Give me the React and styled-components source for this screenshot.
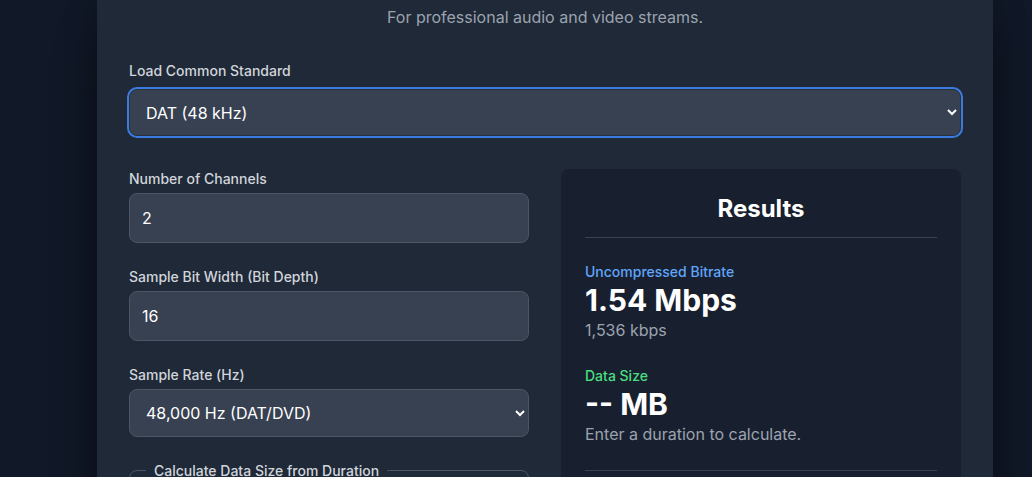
import React, { useState } from "react";
import styled, { createGlobalStyle } from "styled-components";

const Global = createGlobalStyle`
  html, body {
    margin: 0;
    padding: 0;
    background: #111827;
    font-family: Inter, "Noto Sans", sans-serif;
    color: #f9fafb;
    overflow: hidden;
  }
  * { box-sizing: border-box; }
`;

const Page = styled.div`
  display: flex;
  justify-content: center;
  padding-left: 58px;
  min-height: 477px;
`;

const Card = styled.main`
  width: 896px;
  background: #1f2937;
  padding: 5px 32px 40px;
  box-shadow: 0 25px 50px -12px rgba(0, 0, 0, 0.45), 0 0 30px rgba(0, 0, 0, 0.25);
`;

const Subtitle = styled.p`
  margin: 0 0 32px;
  text-align: center;
  font-size: 16px;
  line-height: 24px;
  color: #9ca3af;
`;

const Label = styled.label`
  display: block;
  font-size: 14px;
  line-height: 20px;
  font-weight: 500;
  color: #d1d5db;
  margin-bottom: ${(p) => p.$gap || 4}px;
`;

const Field = styled.div`
  margin-bottom: ${(p) => p.$mb || 0}px;
`;

const fieldBase = `
  width: 100%;
  background: #374151;
  border: 1px solid #4b5563;
  border-radius: 8px;
  color: #ffffff;
  font-family: Inter, "Noto Sans", sans-serif;
  font-size: 16px;
  outline: none;
`;

const Select = styled.select`
  ${fieldBase}
  height: ${(p) => (p.$focused ? 47 : 48)}px;
  padding: 0 12px;
  color-scheme: dark;
  ${(p) =>
    p.$focused &&
    `
    border-color: #27303d;
    box-shadow: 0 0 0 2px #3b7be0;
  `}
`;

const Input = styled.input`
  ${fieldBase}
  height: 50px;
  padding: 0 12px;
`;

const Grid = styled.div`
  display: grid;
  grid-template-columns: 1fr 1fr;
  gap: 32px;
`;

const Column = styled.div`
  display: flex;
  flex-direction: column;
  gap: 24px;
`;

const Fieldset = styled.fieldset`
  margin: 1px 0 0;
  border: 1px solid #4b5563;
  border-radius: 8px;
  padding: 4px 16px 16px;
  min-height: 80px;
`;

const Legend = styled.legend`
  padding: 0 8px;
  font-size: 14px;
  font-weight: 500;
  color: #d1d5db;
`;

const Results = styled.section`
  background: #18202f;
  border-radius: 8px;
  padding: 24px;
  min-height: 320px;
`;

const ResultsTitle = styled.h2`
  margin: 0 0 24px;
  padding-bottom: 12px;
  border-bottom: 1px solid #374151;
  text-align: center;
  font-size: 24px;
  line-height: 32px;
  font-weight: 700;
  color: #ffffff;
`;

const Metric = styled.div`
  margin-bottom: 24px;
`;

const MetricLabel = styled.div`
  font-size: 14px;
  line-height: 20px;
  font-weight: 500;
  color: ${(p) => p.$color};
`;

const MetricValue = styled.div`
  font-size: 30px;
  line-height: 36px;
  font-weight: 700;
  color: #ffffff;
`;

const MetricNote = styled.div`
  font-size: 16px;
  line-height: 24px;
  color: #9ca3af;
`;

const Divider = styled.hr`
  margin: 0;
  border: 0;
  border-top: 1px solid #374151;
`;

export default function App() {
  const [standard, setStandard] = useState("dat");
  const [channels, setChannels] = useState("2");
  const [bits, setBits] = useState("16");
  const [rate, setRate] = useState("48000");

  return (
    <>
      <Global />
      <Page>
        <Card>
          <Subtitle>For professional audio and video streams.</Subtitle>

          <Field $mb={33}>
            <Label $gap={8}>Load Common Standard</Label>
            <Select $focused value={standard} onChange={(e) => setStandard(e.target.value)}>
              <option value="cd">CD Audio (44.1 kHz)</option>
              <option value="dat">DAT (48 kHz)</option>
              <option value="hires">Hi-Res (96 kHz)</option>
            </Select>
          </Field>

          <Grid>
            <Column>
              <Field>
                <Label>Number of Channels</Label>
                <Input value={channels} onChange={(e) => setChannels(e.target.value)} />
              </Field>
              <Field>
                <Label>Sample Bit Width (Bit Depth)</Label>
                <Input value={bits} onChange={(e) => setBits(e.target.value)} />
              </Field>
              <Field>
                <Label>Sample Rate (Hz)</Label>
                <Select value={rate} onChange={(e) => setRate(e.target.value)}>
                  <option value="44100">44,100 Hz (CD)</option>
                  <option value="48000">48,000 Hz (DAT/DVD)</option>
                  <option value="96000">96,000 Hz (Hi-Res)</option>
                </Select>
              </Field>
              <Fieldset>
                <Legend>Calculate Data Size from Duration</Legend>
              </Fieldset>
            </Column>

            <Results>
              <ResultsTitle>Results</ResultsTitle>
              <Metric>
                <MetricLabel $color="#60a5fa">Uncompressed Bitrate</MetricLabel>
                <MetricValue>1.54 Mbps</MetricValue>
                <MetricNote>1,536 kbps</MetricNote>
              </Metric>
              <Metric>
                <MetricLabel $color="#4ade80">Data Size</MetricLabel>
                <MetricValue>-- MB</MetricValue>
                <MetricNote>Enter a duration to calculate.</MetricNote>
              </Metric>
              <Divider />
            </Results>
          </Grid>
        </Card>
      </Page>
    </>
  );
}
